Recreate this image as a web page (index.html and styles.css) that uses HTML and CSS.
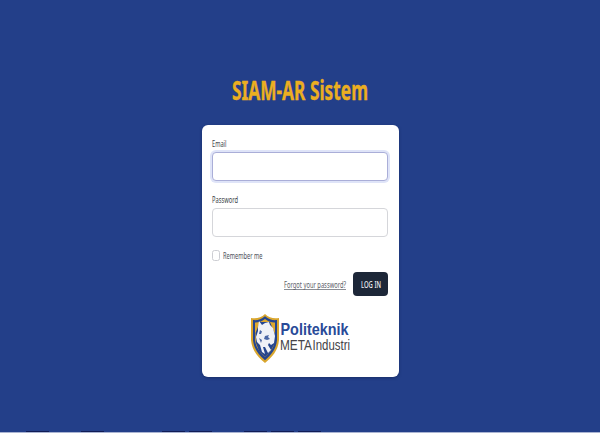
FILE: index.html
```html
<!DOCTYPE html>
<html lang="en">
<head>
<meta charset="utf-8">
<title>SIAM-AR Sistem</title>
<link rel="stylesheet" href="styles.css">
</head>
<body>
<main class="page">
  <h1 class="title"><svg width="140" height="36"><text x="2" y="27" textLength="136" lengthAdjust="spacingAndGlyphs">SIAM-AR Sistem</text></svg></h1>
  <form class="card">
    <label class="label" for="email"><svg width="60" height="14"><text x="0" y="10" textLength="14.5" lengthAdjust="spacingAndGlyphs">Email</text></svg></label>
    <input class="field field-active" id="email" type="email">
    <label class="label label-second" for="password"><svg width="60" height="14"><text x="0" y="10" textLength="26" lengthAdjust="spacingAndGlyphs">Password</text></svg></label>
    <input class="field" id="password" type="password">
    <label class="remember"><input class="check" type="checkbox"><svg width="45" height="14"><text x="0" y="11" textLength="39.5" lengthAdjust="spacingAndGlyphs">Remember me</text></svg></label>
    <div class="actions">
      <a class="forgot"><svg width="62" height="14"><text x="0" y="10" textLength="62" lengthAdjust="spacingAndGlyphs">Forgot your password?</text></svg></a>
      <button class="login" type="button"><svg width="20" height="12"><text x="0" y="9.5" textLength="20" lengthAdjust="spacingAndGlyphs">LOG IN</text></svg></button>
    </div>
    <svg class="logo" width="100" height="50" viewBox="0 0 100 50">
      <path d="M14 0C10 4 5 5 0 4V26C1 37 7 43 14 49C21 43 27 37 28 26V4C23 5 18 4 14 0Z" fill="#d9a62e"/>
      <path d="M14 2.2C10 5.5 6 6.6 2 6V26C3 35.5 8 41 14 46.3C20 41 25 35.5 26 26V6C22 6.6 18 5.5 14 2.2Z" fill="#24458f"/>
      <path d="M14 5C11 7.5 7 8.7 4 8.5V26C5 34 9 38.5 14 43C19 38.5 23 34 24 26V8.5C21 8.7 17 7.5 14 5Z" fill="#dda830"/>
      <path d="M9 8L19 8L24 20V29L19 38L14 43L8 37L5 29L4.5 19Z" fill="#24458f"/>
      <path d="M8 7L11 11L14 9L18 8L19 11L22 14L24 22L23 29L20 31L18 29L17 31L20 36L17 39L14 33L12 33L14 40L11 38L9 31L6 28L5 23L7 17L7 13Z" fill="#eff1f7"/>
      <path d="M9 16L11 17.5L10 20L8 20ZM14 22L18 21L17 23L19 25L16 26L13 25ZM8 24L11 26L10 29Z" fill="#4b67a5"/>
      <text class="brand" x="29.5" y="21" textLength="68" lengthAdjust="spacingAndGlyphs">Politeknik</text>
      <text class="meta" x="29" y="36" textLength="32" lengthAdjust="spacingAndGlyphs">META</text>
      <text class="meta" x="61.5" y="36" textLength="37.5" lengthAdjust="spacingAndGlyphs">Industri</text>
    </svg>
  </form>
  <div class="edge"><i class="gap"></i><i class="tab"></i><i class="gap space"></i><i class="tab"></i><i class="gap space wide"></i><i class="tab"></i><i class="gap tiny"></i><i class="tab"></i><i class="gap space"></i><i class="tab"></i><i class="gap tiny"></i><i class="tab"></i><i class="gap tiny"></i><i class="tab"></i></div>
</main>
</body>
</html>
```
FILE: styles.css
```css
* { box-sizing: border-box; }
body { margin: 0; background: #233f89; font-family: "Noto Sans", "Open Sans", sans-serif; }
svg { display: block; overflow: visible; }
.page { height: 433px; display: flex; flex-direction: column; align-items: center; overflow: hidden; padding-top: 73px; }
.title { margin: 0 0 16px; font-size: 26px; font-weight: 700; line-height: 1; }
.title text { fill: #ebae21; stroke: #ebae21; stroke-width: .35px; }
.card { width: 197px; height: 252px; flex: none; background: #fff; border-radius: 6px; padding: 12px 10.5px 0 10px; display: flex; flex-direction: column; box-shadow: 0 1px 3px #101f4a80; }
.label { display: block; height: 15px; font-size: 9.5px; }
.label text { fill: #3c3f48; }
.label-second { margin-top: 12px; }
.field { display: block; width: 100%; height: 29px; flex: none; margin: 0; border: 1px solid #d5d6da; border-radius: 4px; background: #fff; outline: none; }
.field-active { border-color: #aaaed8; box-shadow: 0 0 0 2px #dfe4f8; }
.remember { display: flex; align-items: center; gap: 3px; margin-top: 11px; height: 14px; font-size: 9.5px; }
.remember text { fill: #4c505a; }
.check { appearance: none; width: 8px; height: 11px; margin: 0; border: 1px solid #cdced3; border-radius: 2.5px; }
.actions { display: flex; justify-content: flex-end; align-items: center; gap: 7px; margin-top: 10px; height: 24px; font-size: 9.5px; }
.forgot { border-bottom: 1px solid #8b8e95; height: 12px; }
.forgot text { fill: #5a5e68; }
.login { width: 35px; height: 24px; border: 0; border-radius: 4px; background: #1d2738; padding: 0; display: flex; align-items: center; justify-content: center; font: 500 8.5px "Noto Sans", sans-serif; }
.login text { fill: #f0f1f4; }
.logo { margin: 18px 0 0 39.5px; flex: none; }
.brand { font: 700 17px "Liberation Sans", sans-serif; fill: #294a98; }
.meta { font: 400 14.5px "Liberation Sans", sans-serif; fill: #444449; }
.edge { width: 600px; height: 2px; flex: none; margin-top: auto; display: flex; border-bottom: 1px solid #aab4d2; }
.tab { width: 23px; height: 1px; background: #101c55; }
.gap { width: 26px; }
.space { width: 32px; }
.wide { width: 58px; }
.tiny { width: 4px; }
```
